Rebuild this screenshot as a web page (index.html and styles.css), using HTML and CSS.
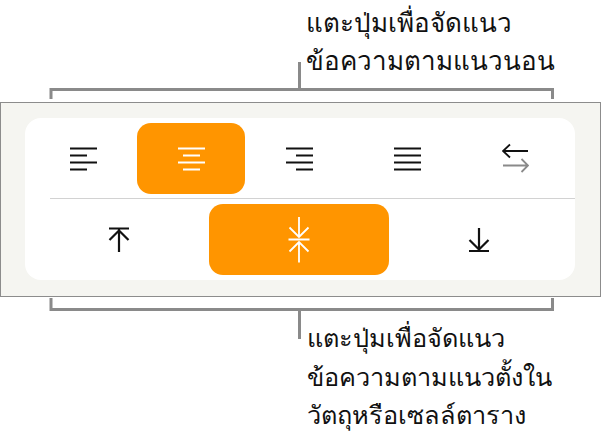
FILE: index.html
```html
<!DOCTYPE html>
<html lang="th">
<head>
<meta charset="utf-8">
<title>จัดแนวข้อความ</title>
<link rel="stylesheet" href="styles.css">
</head>
<body>
<p class="caption caption-top">แตะปุ่มเพื่อจัดแนว<br>ข้อความตามแนวนอน</p>
<svg class="bracket bracket-top" width="601" height="37" viewBox="0 0 601 37"><path d="M51 37V27.5H552.5V37M299.5 27.5V0"/></svg>
<section class="panel">
  <div class="card">
    <div class="row row-h">
      <button class="btn"><svg class="ico" width="27" height="24" viewBox="0 0 27 24"><path d="M0 1.500H27M0 8.500H17M0 15.500H27M0 22.500H17"/></svg></button>
      <button class="btn active"><svg class="ico" width="27" height="24" viewBox="0 0 27 24"><path d="M0 1.500H27M5 8.500H22M0 15.500H27M5 22.500H22"/></svg></button>
      <button class="btn"><svg class="ico" width="27" height="24" viewBox="0 0 27 24"><path d="M0 1.500H27M10 8.500H27M0 15.500H27M10 22.500H27"/></svg></button>
      <button class="btn"><svg class="ico" width="27" height="24" viewBox="0 0 27 24"><path d="M0 1.500H27M0 8.500H27M0 15.500H27M0 22.500H27"/></svg></button>
      <button class="btn"><svg class="ico" width="27" height="32" viewBox="0 0 27 32"><path d="M1 8H26M8 1.500L1 8L8 14.500"/><path class="muted" d="M1 22.500H26M19.500 16L26 22.500L19.500 29"/></svg></button>
    </div>
    <div class="divider"></div>
    <div class="row row-v">
      <button class="btn"><svg class="ico ico-bold" width="22" height="26" viewBox="0 0 22 26"><path d="M1 1.500H21M11 2.500V25M1.500 13L11 3.500L20.500 13"/></svg></button>
      <button class="btn active"><svg class="ico" width="22" height="46" viewBox="0 0 22 46"><path d="M0.500 22.500H21.500M11 0V20M1.500 10.500L11 20L20.500 10.500M11 25V45.500M1.500 34.500L11 25L20.500 34.500"/></svg></button>
      <button class="btn"><svg class="ico ico-bold" width="22" height="26" viewBox="0 0 22 26"><path d="M1 24H21M11 1V23M1.500 13L11 22.500L20.500 13"/></svg></button>
    </div>
  </div>
</section>
<svg class="bracket bracket-bottom" width="601" height="42" viewBox="0 0 601 42"><path d="M51 1V12.500H552.500V1M299.500 12.500V42"/></svg>
<p class="caption caption-bottom">แตะปุ่มเพื่อจัดแนว<br>ข้อความตามแนวตั้งใน<br>วัตถุหรือเซลล์ตาราง</p>
</body>
</html>
```
FILE: styles.css
```css
* { box-sizing: border-box; }
html, body { margin: 0; padding: 0; background: #fff; }
body { width: 601px; height: 443px; overflow: hidden; font-family: "Noto Sans", "Inter", "DejaVu Sans", sans-serif; color: #111; }
.caption { margin: 0; }
.caption-top { height: 62px; padding: 3px 0 0 306px; line-height: 38px; font-size: 26px; }
.caption-bottom { padding: 0 0 0 307px; line-height: 38.500px; margin-top: -21px; font-size: 25.300px; }
.bracket { display: block; fill: none; stroke: #8a8a8a; stroke-width: 3; }
.panel { width: 601px; height: 195px; margin-top: 3px; padding: 15px 25px 15px 24px; background: #f5f5f1; border: 1px solid #8c8c8c; }
.card { height: 162px; background: #fff; border-radius: 16px; padding: 5px 0; }
.row { display: grid; margin-left: 4px; width: 540px; }
.row-h { grid-template-columns: repeat(5, 108px); height: 71px; }
.row-v { grid-template-columns: repeat(3, 180px); height: 71px; }
.btn { display: flex; align-items: center; justify-content: center; margin: 0; padding: 0; border: 0; background: none; border-radius: 14px; }
.active { background: #ff9500; }
.divider { height: 1px; margin: 4px 0 5px 25px; background: #d2d2d2; }
.ico { display: block; fill: none; stroke: #111; stroke-width: 1.800; }
.ico-bold { stroke-width: 2.200; }
.active .ico { stroke: #fff; }
.muted { stroke: #8a8a8a; }
```
